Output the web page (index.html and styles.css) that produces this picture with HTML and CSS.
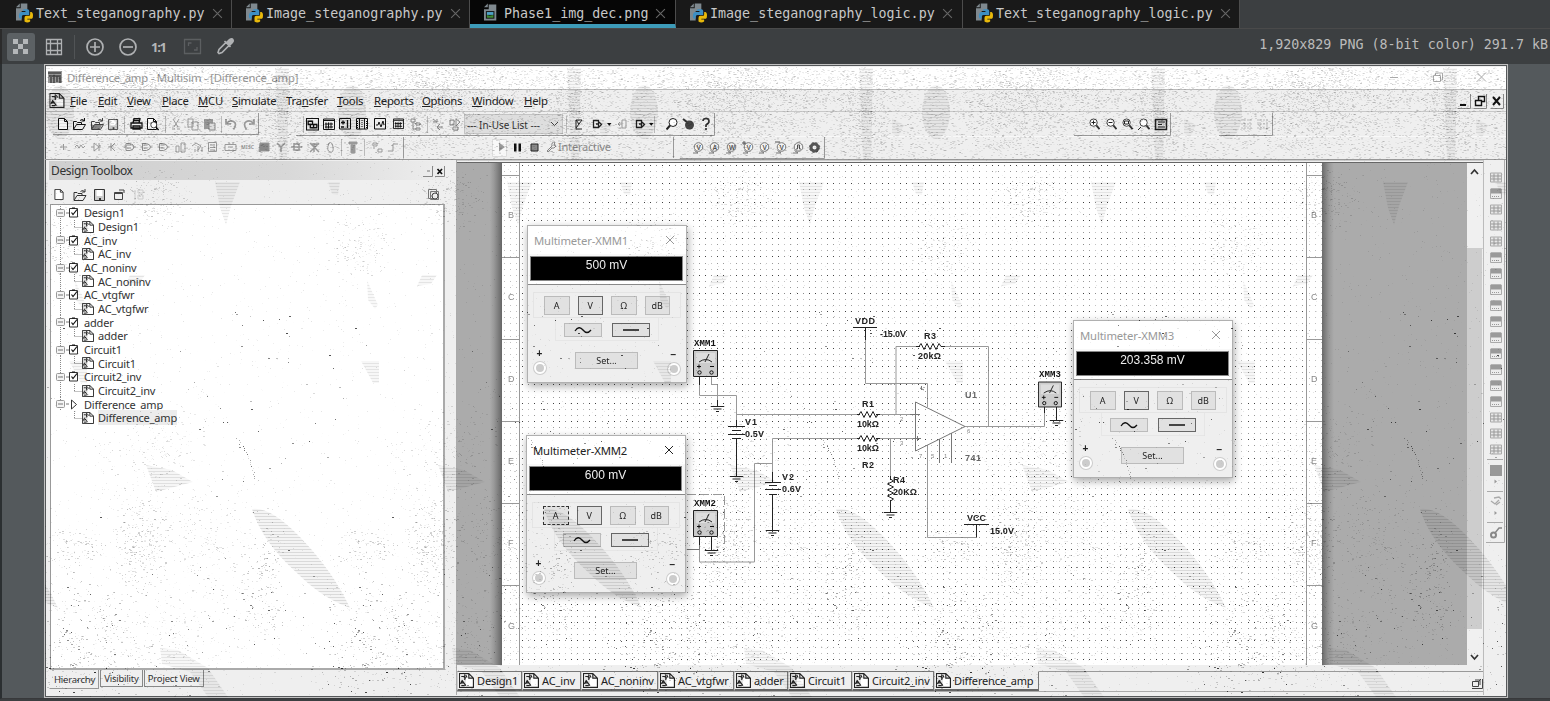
FILE: index.html
```html
<!DOCTYPE html>
<html lang="en">
<head>
<meta charset="utf-8">
<title>Phase1_img_dec.png</title>
<link rel="stylesheet" href="styles.css">
</head>
<body>
<svg class="defs" width="0" height="0">
  <defs>
    <symbol id="py" viewBox="0 0 18 20"><path d="M5 0h7v8H0V5h5z" fill="#7f898f"/><path d="M0 8h6v10H0zM0 4l4-4v4z" fill="#7f898f"/><path d="M8 6h4q2 0 2 2v4H8q-2 0-2 2v2H5q-2 0-2-3t2-4h5V8H7z" fill="#3d8fc4"/><path d="M15 9h1q2 0 2 4t-2 3h-4v1h3v2q-3 2-6 0v-4q0-2 2-2h3q1 0 1-2z" fill="#e8b90b"/></symbol>
    <symbol id="png" viewBox="0 0 18 20"><path d="M5 1h8v17H0V6h5zM0 4l4-4v4z" fill="#7f898f"/><rect x="2" y="8" width="9" height="8" fill="#111"/><path d="M3 9h7v3H3z" fill="#4fa3c7"/><path d="M3 12l3 1 4-1v3H3z" fill="#3f8a35"/></symbol>
    <symbol id="x" viewBox="0 0 10 10"><path d="M1 1l8 8M9 1l-8 8" stroke="currentColor" fill="none"/></symbol>
    <symbol id="doc" viewBox="0 0 13 13"><path d="M.5.5h8l4 4v8H.5zM8.500.5v4h4" fill="#fff" stroke="#222"/><path d="M1 1h5v11H1z" fill="#e4e4e4"/><path d="M2 3h2l2 1.500M5 1v5M3 6L1.500 9l3-1M3 7l3 4M2 11h3M6 2l1 2" stroke="#222" fill="none"/></symbol>
    <symbol id="chk" viewBox="0 0 10 11"><path d="M.5 1.500h8v8.500h-8z" fill="#fff" stroke="#333"/><path d="M3 1h3M2.500 5.500l1.500 2 4-5" stroke="#111" fill="none" stroke-width="1.200"/></symbol>
    <symbol id="new" viewBox="0 0 12 12"><path d="M1.500.5h6l3 3v8h-9zM7.500.5v3h3" fill="#fff" stroke="currentColor"/></symbol>
    <symbol id="open" viewBox="0 0 13 12"><path d="M.5 11V3.500h3l1 1h4V6M.5 11.500L3.500 6.500h9l-3 5zM7 2.500q2-2 4 0M11.500 0v3h-3" fill="none" stroke="currentColor"/></symbol>
    <symbol id="save" viewBox="0 0 12 12"><path d="M.5.5h10v11h-10z" fill="#ccc" stroke="currentColor"/><path d="M2.500 1h6v6h-6z" fill="#fff"/><path d="M5 9h2v2H5z" fill="currentColor"/></symbol>
    <symbol id="print" viewBox="0 0 13 12"><path d="M3 5l1-4.500h6L9 5M1 5h11v5H1zM3 8h7v3H3zM4 2.500h5" fill="none" stroke="currentColor" stroke-width="1.300"/></symbol>
    <symbol id="mag" viewBox="0 0 12 12"><circle cx="5" cy="4.500" r="4" fill="#fff" stroke="currentColor"/><path d="M8 7.500l3.500 4" stroke="currentColor" stroke-width="2"/></symbol>
    <symbol id="grid" viewBox="0 0 12 12"><path d="M.5.5h11v10.500H.5z" fill="#eee" stroke="currentColor"/><path d="M1 2h10M3 4v6M5.500 4v6M8 4v6M2 5.500h8M2 8.500h8" stroke="currentColor"/></symbol>
    <symbol id="net" viewBox="0 0 12 12"><path d="M.5.5h11v10.500H.5z" fill="#eee" stroke="currentColor"/><path d="M2 3h4v3H2zM7 6h3v3H7zM4 6v3h3" fill="none" stroke="currentColor" stroke-width="1.200"/></symbol>
    <symbol id="part" viewBox="0 0 12 12"><path d="M.5.5h11v10.500H.5z" fill="#eee" stroke="currentColor"/><path d="M2 4.500h4M4 2.500v4M8.500 2v8M2 9h3" fill="none" stroke="currentColor" stroke-width="1.300"/></symbol>
    <symbol id="cols" viewBox="0 0 12 12"><path d="M.5.5h11v10.500H.5z" fill="#eee" stroke="currentColor"/><path d="M3.500 1v10M8.500 1v10" stroke="currentColor"/><path d="M6 2v8M1.500 3v7M10.500 3v7" stroke="currentColor" stroke-dasharray="1 1"/></symbol>
    <symbol id="wave" viewBox="0 0 12 12"><path d="M.5.5h11v10.500H.5z" fill="#eee" stroke="currentColor"/><path d="M2 7h2l1-3 2 5 2-6 1 4" fill="none" stroke="currentColor"/></symbol>
    <symbol id="undo" viewBox="0 0 12 12"><path d="M1 1v5h5M1.500 5.500q3-4 7-2t0 8" fill="none" stroke="currentColor" stroke-width="1.700"/></symbol>
    <symbol id="gate" viewBox="0 0 12 10"><path d="M0 5h2M2 1.500h4q4 1 4 3.500T6 8.500H2zM10 5h2M3 3h4M3 6h4" fill="none" stroke="currentColor"/></symbol>
    <symbol id="probe" viewBox="0 0 12 12"><circle cx="6.500" cy="5" r="4.300" fill="#f4f4f4" stroke="currentColor"/><path d="M1 11h5L2.500 8.500" fill="none" stroke="currentColor"/></symbol>
    <symbol id="inst" viewBox="0 0 12 10"><path d="M.5.5h11v9.500H.5z" fill="#ececec" stroke="#aaa"/><path d="M1 0h10v5H1z" fill="#9a9a9a"/><path d="M2 8h8" stroke="#999" stroke-dasharray="1 1"/></symbol>
    <symbol id="instb" viewBox="0 0 12 10"><path d="M.5.5h11v9H.5z" fill="#e6e6e6" stroke="#aaa"/><path d="M1 3.500h10M1 6.500h10M4 1v8M8 1v8" stroke="#999"/></symbol>
    <symbol id="meter" viewBox="0 0 25 27"><path d="M.5.5h24v26H.5z" fill="#ccc" stroke="#222"/><path d="M3 3h19v10H3z" fill="#ddd"/><path d="M6 12q7-5 13 0M12 12l4-8" stroke="#222" fill="none"/><path d="M4 16.500h4M6 14.500v4M17 16.500h4" stroke="#111"/><circle cx="6.500" cy="22.500" r="1.700" fill="none" stroke="#111"/><circle cx="18.500" cy="22.500" r="1.700" fill="none" stroke="#111"/></symbol>
    <symbol id="gnd" viewBox="0 0 14 8"><path d="M0 1.500h14M3 4h8M5.500 6.500h3" stroke="#222"/></symbol>
    <symbol id="tp" viewBox="0 0 30 14"><path d="M5.500 0v14" stroke="#888" stroke-dasharray="1 1"/><rect x="1.500" y="3.500" width="8" height="7" rx="1" fill="#f4f4f4" stroke="#999"/><path d="M3 7h5M11 7h3" stroke="#777"/></symbol>
    <symbol id="tc" viewBox="0 0 30 14"><path d="M5.500 0v14M19.500 0v7M19.500 7.500h8" fill="none" stroke="#888" stroke-dasharray="1 1"/></symbol>
    <symbol id="tl" viewBox="0 0 30 14"><path d="M19.500 0v7M19.500 7.500h8" fill="none" stroke="#888" stroke-dasharray="1 1"/></symbol>
  </defs>
</svg>

<nav class="tabs">
  <div class="tab t1"><svg class="fi"><use href="#py"/></svg><span>Text_steganography.py</span><svg class="tx"><use href="#x"/></svg></div>
  <div class="tab t2"><svg class="fi"><use href="#py"/></svg><span>Image_steganography.py</span><svg class="tx"><use href="#x"/></svg></div>
  <div class="tab t3 on"><svg class="fi"><use href="#png"/></svg><span>Phase1_img_dec.png</span><svg class="tx"><use href="#x"/></svg></div>
  <div class="tab t4"><svg class="fi"><use href="#py"/></svg><span>Image_steganography_logic.py</span><svg class="tx"><use href="#x"/></svg></div>
  <div class="tab t5"><svg class="fi"><use href="#py"/></svg><span>Text_steganography_logic.py</span><svg class="tx"><use href="#x"/></svg></div>
</nav>

<header class="viewbar">
  <svg width="240" height="35" viewBox="0 29 240 35">
    <rect x="7" y="33" width="28" height="28" rx="3" fill="#5c6164"/>
    <path d="M13 39h5v5h-5zM23 39h5v5h-5zM18 44h5v5h-5zM13 49h5v5h-5zM23 49h5v5h-5z" fill="#b4b7b9"/>
    <path d="M46.500 39.500h15v15h-15zM50.500 39v16M57.500 39v16M46 43.500h16M46 50.500h16" fill="none" stroke="#afb1b3" stroke-width="1.300"/>
    <path d="M74.500 35v24" stroke="#515456"/>
    <g fill="none" stroke="#afb1b3" stroke-width="1.700"><circle cx="95" cy="47" r="8"/><path d="M90 47h10M95 42v10"/><circle cx="128" cy="47" r="8"/><path d="M123 47h10"/></g>
    <text x="151" y="51.500" class="ratio" textLength="16">1:1</text>
    <path d="M184.500 39.500h16v14h-16zM188.500 46v-3h3M197 47v3h-3" fill="none" stroke="#5c5f61" stroke-width="1.300"/>
    <path d="M219 53.500l-1-1 1-3 7-7 3 3-7 7zM224.500 41l6 6" fill="none" stroke="#afb1b3" stroke-width="1.600"/><path d="M226 42l3-3q3-2 4.500 0t-.5 4l-3 3z" fill="#afb1b3"/>
  </svg>
  <span class="info">1,920x829 PNG (8-bit color) 291.7 kB</span>
</header>

<main class="viewer">
<section class="shot">
  <div class="title">
    <svg width="14" height="14" viewBox="0 0 14 14"><path d="M0 1h14v12H0z" fill="#999"/><path d="M0 3h13M1 6h12M3 7v6M6 5v8M9 6v6M12 7v6" stroke="#444" stroke-width="1.500"/></svg>
    <span>Difference_amp - Multisim - [Difference_amp]</span>
    <svg class="cap" width="100" height="14" viewBox="0 0 100 14" fill="none" stroke="#aaa"><path d="M0 7.500h8M43.500 5.500h7v6h-7zM45.500 5v-2h7v7h-2M87 2.500l9 9M96 2.500l-9 9"/></svg>
  </div>
  <div class="menu">
    <svg width="16" height="15"><use href="#doc"/></svg>
    <div class="items"><span><u>F</u>ile</span><span><u>E</u>dit</span><span><u>V</u>iew</span><span><u>P</u>lace</span><span><u>M</u>CU</span><span><u>S</u>imulate</span><span>Tra<u>n</u>sfer</span><span><u>T</u>ools</span><span><u>R</u>eports</span><span><u>O</u>ptions</span><span><u>W</u>indow</span><span><u>H</u>elp</span></div>
    <svg class="cap" width="48" height="17" viewBox="0 0 48 17"><path d="M.5 16.500h13V2M16.500 16.500h13V2M33.500 16.500h13V2" fill="none" stroke="#888"/><path d="M3 13h6" stroke="#111" stroke-width="2"/><path d="M18.500 8.500h6v5h-6zM21.500 8V4.500h6v5h-3" fill="none" stroke="#111" stroke-width="1.400"/><path d="M36 5l7 8M43 5l-7 8" stroke="#111" stroke-width="2"/></svg>
  </div>
  <svg class="bar" width="1461" height="48" viewBox="45 112 1461 48">
    <g fill="none" stroke="#999"><path d="M53 134.500h205.500V113M296 135.500h411.500V113M1077 135.500h86.500V113M1219 135.500h41.500V113M46 158.500h357.500V137M495 158.500h157V137M659 158.500h154V137" stroke="none"/><path d="M53 134.500h205.500V113M296 135.500h418.500V113M1074 135.500h96.500V113M1219 135.500h53.500V113M45 159.500h1461M403.500 158.500V137M673.500 158V137M680 158.500h144.500V137"/><path d="M124.500 116v17M165.500 116v17M221.500 116v17M303.500 116v17M427.500 116v17M566.500 116v17M654.500 116v17M341.500 139v17M364.500 139v17" stroke="#bbb"/></g>
    <path d="M46 136.500h1460" stroke="#f8f8f8"/>
    <g color="#111">
      <use href="#new" x="57" y="118" width="12" height="12"/><use href="#open" x="73" y="118" width="13" height="12"/>
      <use href="#print" x="130" y="118" width="13" height="12"/><use href="#new" x="146" y="118" width="12" height="12"/><use href="#mag" x="150" y="121" width="9" height="10"/>
      <use href="#net" x="306" y="118" width="13" height="13"/><use href="#grid" x="323" y="118" width="12" height="13"/><use href="#part" x="339" y="118" width="12" height="12"/><use href="#cols" x="356" y="118" width="12" height="12"/><use href="#wave" x="374" y="118" width="12" height="12"/><use href="#grid" x="393" y="118" width="11" height="12"/>
    </g>
    <g color="#444"><path d="M92 125h10l-3 5h-7z" fill="#888"/><use href="#open" x="91" y="118" width="13" height="12"/><use href="#save" x="108" y="119" width="11" height="11"/></g>
    <g color="#999">
      <path d="M173 119l5 8M179 119l-5 8M172 129h3M177 129h3M188 119h5v8h-5zM192 122h6v8h-6z" stroke="#999" fill="none"/><path d="M204 119h9v10h-9z" fill="#999"/><path d="M209 123h6v7h-6z" fill="#ddd" stroke="#888"/>
      <use href="#undo" x="225" y="118" width="12" height="12"/><use href="#undo" x="-255" y="118" width="12" height="12" transform="scale(-1 1)"/>
      <path d="M411 119h4v3h-4zM416 123h4v2h-4zM416 128h4v2h-4zM413 122v7h3M433 119l4 3M433 122h4v-3M437 127h6M440 124l-3 3 3 3M450 120h4v5h-4zM456 119l4 3-4 4zM453 127h5v3h-5z" stroke="#888" fill="none"/>
    </g>
    <rect x="464.500" y="114.500" width="98" height="19" fill="#dedede" stroke="#c4c4c4"/>
    <text x="467" y="129" textLength="73" lengthAdjust="spacingAndGlyphs" fill="#333">--- In-Use List ---</text>
    <path d="M551 122l3.500 3.500 3.500-3.500" fill="none" stroke="#444"/>
    <g fill="none" stroke="#222"><path d="M582 120h-6v9h6M576 120l3 4-3 4M582 120l-3 4"/><path d="M593.500 120.500h5v7h-5zM596 124h3M599 122l2.500 2.500-2.500 2.500" stroke-width="1.300"/><path d="M636.500 120.500h5v7h-5zM639 124h3M642 122l2.500 2.500-2.500 2.500" stroke-width="1.300"/><path d="M626 120h-4v8h4zM622 124h-4l2-2M618 124l2 2" stroke="#999"/></g>
    <path d="M607 123h4.500l-2.200 2.700zM649 123h4.500l-2.200 2.700z" fill="#111"/>
    <g color="#222"><use href="#mag" x="-678" y="118" width="12" height="12" transform="scale(-1 1)"/><path d="M683 119l4 3" stroke="#333" stroke-width="2"/><circle cx="689.500" cy="125" r="4.500" fill="#444"/><path d="M703 121q0-2.500 3-2.500t3 2.500-3 4v2M706 128v2" fill="none" stroke="#333" stroke-width="1.700"/></g>
    <g color="#333"><use href="#mag" x="1089" y="118" width="11" height="12"/><use href="#mag" x="1106" y="118" width="11" height="12"/><use href="#mag" x="1122" y="118" width="11" height="12"/><use href="#mag" x="1139" y="118" width="11" height="12"/><path d="M1091.500 122.500h4M1093.500 120.500v4M1108.500 122.500h4M1124.500 121h4v3h-4zM1138 130l3-3" stroke="#222" fill="none"/><path d="M1155.500 119.500h11v10h-11z" fill="#ddd" stroke="#222" stroke-width="1.500"/><path d="M1158 122h7M1158 124.500h4M1158 127h7" stroke="#222"/></g>
    <path d="M1241 120h12M1241 124h12M1241 128h12M1244 119v11M1250 119v11M1257 120h12M1257 124h12M1257 128h12M1260 119v11M1267 119v11" stroke="#bbb" stroke-dasharray="2 1"/>
    <g fill="none" stroke="#999" color="#8c8c8c">
      <path d="M60 147h7M63.500 144v6M75 147l2-2 2 3 2-3 2 3 2-2M91 147h3M94 143v8l5-4zM99 143v8M99 147h2M108 147h3M111 143v8M115 143l-4 4 4 4"/>
      <use href="#gate" x="124" y="142" width="12" height="10"/><use href="#gate" x="140" y="142" width="13" height="10"/><use href="#gate" x="157" y="142" width="13" height="10"/>
      <path d="M176 152v-6h3v6zM181 152v-9h4v9zM192 146l4-3 5 3-3 4M198 152v-6M202 152v-5M195 152v-3M208.500 142.500h8v9h-8zM210 145h5M210 147.500h5M210 150h5M225 144.500h11v6h-11zM229 142v2M233 142v2M228 147h5"/>
      <text x="241" y="149" class="tiny" stroke="none" fill="#999" textLength="13">MISC</text>
      <path d="M260 143h9v8h-10z" fill="#888"/><path d="M277 143l4 4 4-4M281 147v5M291 147h11M294 144h5v6h-5zM310 143l9 9M319 143l-9 9M311 144h8M314 143v9" stroke-width="1.500"/><path d="M329 143q3-2 4 4t-3 5-1-9M373 143h4v3h-4zM378 149h4v3h-4zM374 147v2M388 151h5v-7h5"/><path d="M349 142h8v2h-8zM351 145h4v8h-4z" fill="#999"/>
    </g>
    <path d="M492.500 139.500h14v17h-14z" fill="#f8f8f8" stroke="#ddd"/><path d="M499 142.500v9l6-4.500z" fill="#999"/><path d="M514 143.500h2.500v8H514zM518.500 143.500h2.500v8h-2.500z" fill="#111"/><path d="M531 144h7v7h-7z" fill="#888" stroke="#222"/>
    <path d="M547 151l5-5q-1-4 3-4l-1 3 2 1-2 2h-2l-4 4z" fill="none" stroke="#888"/><text x="558" y="150.500" textLength="53" fill="#8b8b8b">Interactive</text>
    <g color="#777"><use href="#probe" x="692" y="142" width="12" height="12"/><use href="#probe" x="708" y="142" width="12" height="12"/><use href="#probe" x="725" y="142" width="12" height="12"/><use href="#probe" x="742" y="142" width="12" height="12"/><use href="#probe" x="758" y="142" width="12" height="12"/><use href="#probe" x="775" y="142" width="12" height="12"/><use href="#probe" x="792" y="142" width="12" height="12"/></g>
    <g class="pt"><text x="696.500" y="149.500">V</text><text x="712.500" y="149.500">A</text><text x="729" y="149.500">W</text><text x="746.500" y="149.500">V</text><text x="762.500" y="149.500">V</text><text x="779.500" y="149.500">V</text></g>
    <path d="M796 149h1.500v-4h2v4h1.500M742 143h4M744 141v4M775 142h5" fill="none" stroke="#555"/>
    <circle cx="814.500" cy="147.500" r="3.500" fill="none" stroke="#555" stroke-width="3"/><circle cx="814.500" cy="147.500" r="5" fill="none" stroke="#555" stroke-dasharray="2 2"/>
  </svg>

  <div class="body">
    <aside class="toolbox">
      <div class="tbhead"><span>Design Toolbox</span><svg width="22" height="12" viewBox="0 0 22 12"><path d="M0 11.500h9.500V1M12 11.500h9.500V1" fill="none" stroke="#888"/><path d="M4 6h3" stroke="#777"/><path d="M14.500 4l4.500 5M19 4l-4.500 5" stroke="#111" stroke-width="1.700"/></svg></div>
      <div class="tbtools"><svg width="396" height="20" viewBox="49 184 396 20"><g color="#333"><use href="#new" x="53" y="190" width="12" height="11"/><use href="#open" x="73" y="190" width="14" height="12"/><use href="#save" x="94" y="190" width="12" height="12"/><path d="M114.500 193.500h8v7h-8zM114 194.500h9M119 191h5v3" fill="none" stroke="#444"/></g><path d="M134 192h2M135 192v9M138 191h5v3h-5zM138 196h5v4h-5z" fill="none" stroke="#ccc"/><path d="M428.500 190.500h8v9h-8zM430.500 192.500h8v8h-8z" fill="#eee" stroke="#777"/><circle cx="435" cy="197" r="3" fill="#eee" stroke="#444"/></svg></div>
      <div class="tree">
        <div class="row"><svg class="ln"><use href="#tp"/></svg><svg class="ck"><use href="#chk"/></svg>Design1</div>
        <div class="row kid"><svg class="ln"><use href="#tc"/></svg><svg class="dc"><use href="#doc"/></svg><b>Design1</b></div>
        <div class="row"><svg class="ln"><use href="#tp"/></svg><svg class="ck"><use href="#chk"/></svg>AC_inv</div>
        <div class="row kid"><svg class="ln"><use href="#tc"/></svg><svg class="dc"><use href="#doc"/></svg><b>AC_inv</b></div>
        <div class="row"><svg class="ln"><use href="#tp"/></svg><svg class="ck"><use href="#chk"/></svg>AC_noninv</div>
        <div class="row kid"><svg class="ln"><use href="#tc"/></svg><svg class="dc"><use href="#doc"/></svg><b>AC_noninv</b></div>
        <div class="row"><svg class="ln"><use href="#tp"/></svg><svg class="ck"><use href="#chk"/></svg>AC_vtgfwr</div>
        <div class="row kid"><svg class="ln"><use href="#tc"/></svg><svg class="dc"><use href="#doc"/></svg><b>AC_vtgfwr</b></div>
        <div class="row"><svg class="ln"><use href="#tp"/></svg><svg class="ck"><use href="#chk"/></svg>adder</div>
        <div class="row kid"><svg class="ln"><use href="#tc"/></svg><svg class="dc"><use href="#doc"/></svg><b>adder</b></div>
        <div class="row"><svg class="ln"><use href="#tp"/></svg><svg class="ck"><use href="#chk"/></svg>Circuit1</div>
        <div class="row kid"><svg class="ln"><use href="#tc"/></svg><svg class="dc"><use href="#doc"/></svg><b>Circuit1</b></div>
        <div class="row"><svg class="ln"><use href="#tp"/></svg><svg class="ck"><use href="#chk"/></svg>Circuit2_inv</div>
        <div class="row kid"><svg class="ln"><use href="#tc"/></svg><svg class="dc"><use href="#doc"/></svg><b>Circuit2_inv</b></div>
        <div class="row"><svg class="ln"><use href="#tp"/></svg><svg class="ck" viewBox="0 0 10 11"><path d="M2.500 1v9l5-4.500z" fill="#fff" stroke="#333"/></svg>Difference_amp</div>
        <div class="row kid"><svg class="ln"><use href="#tl"/></svg><svg class="dc"><use href="#doc"/></svg><b class="sel">Difference_amp</b></div>
      </div>
      <div class="tbtabs"><span class="cur">Hierarchy</span><span>Visibility</span><span>Project View</span></div>
    </aside>

    <section class="work">
      <div class="stage">
        <div class="canvas">
          <canvas id="dots" width="820" height="502"></canvas>
          <svg class="sch" width="1010" height="502" viewBox="457 163 1010 502">
            <g fill="none" stroke="#999"><path d="M519.500 163v502M502 175.500h17M502 257.500h17M502 339.500h17M502 421.500h17M502 503.500h17M502 585.500h17M1306.500 163v502M1307 175.500h15M1307 257.500h15M1307 339.500h15M1307 421.500h15M1307 503.500h15M1307 585.500h15"/></g>
            <g class="rul"><text x="508" y="217.500">B</text><text x="508" y="299.500">C</text><text x="508" y="381.500">D</text><text x="508" y="463.500">E</text><text x="508" y="545.500">F</text><text x="508" y="628.500">G</text><text x="1311" y="217.500">B</text><text x="1311" y="299.500">C</text><text x="1311" y="381.500">D</text><text x="1311" y="463.500">E</text><text x="1311" y="545.500">F</text><text x="1311" y="628.500">G</text></g>
            <g fill="none" stroke="#999">
              <path d="M865.500 340v43.500h62V407M916 346.500h-20v68M945 346.500h43.500v80M736 414.500h121M880 414.500h35M857 438.500h-84.500V472M880 438.500h35M890.500 438v38M965 426.500h79.500V412M976.500 537.500h-49V445M699.500 384v11.500h37V420M711.500 377v7.500h6V400M754.500 562V463.500H773M699.500 545v17h55"/>
              <path d="M915.500 402v49l49.500-24.500z" stroke="#777"/><path d="M939.500 439v24M951.500 433v30M699.500 537v12.500H687" stroke="#777"/><path d="M687 494.500h37.500v55" stroke="#999" stroke-dasharray="9 4"/>
              <path d="M910 414.500h10M913 438.500h8M917.500 436v5M921.500 386v4M920 388l4 2" stroke="#777"/>
            </g>
            <g fill="none" stroke="#222">
              <path d="M853 327.500h24M865.500 327v13M964 524.500h25M976.500 524v13.500M699.500 377v8M699.500 537v8M711.500 537v14M1044.500 407v6M1056.500 407v13M717.500 400v6M736.500 420v7M736.500 439v38M772.500 472v10M772.500 494v36M890.500 476v4M890.500 500v12M945 346.500h-4M916 346.500h4M857 414.500h3M857 438.500h3M876 414.500h4M876 438.500h4"/>
              <path d="M728 426.500h17M732 430.500h9M728 434.500h17M732 438.500h9M765 482.500h16M769 485.500h8M765 489.500h16M769 494.500h8"/>
              <path d="M919 346.500l2-3 3 6 3-6 3 6 3-6 3 6 3-6 2 3M859 414.500l2-3 3 6 3-6 3 6 3-6 3 6 2-3M859 438.500l2-3 3 6 3-6 3 6 3-6 3 6 2-3M890.500 479l3 2-6 3 6 3-6 3 6 3-6 3 6 3-3 2"/>
            </g>
            <use href="#meter" x="693" y="350" width="25" height="27"/><use href="#meter" x="693" y="510" width="25" height="27"/><use href="#meter" x="1038" y="381" width="24" height="27"/>
            <use href="#gnd" x="710.500" y="405" width="14" height="8"/><use href="#gnd" x="729.500" y="475" width="14" height="8"/><use href="#gnd" x="765.500" y="529" width="14" height="8"/><use href="#gnd" x="704.500" y="549" width="14" height="8"/><use href="#gnd" x="883.500" y="511" width="14" height="8"/><use href="#gnd" x="1049.500" y="419" width="14" height="8"/>
            <g class="mono"><text x="694" y="345.500" textLength="22">XMM1</text><text x="694" y="505.500" textLength="22">XMM2</text><text x="1039" y="376.500" textLength="22">XMM3</text></g>
            <g class="lab"><text x="855" y="323.500" textLength="20">VDD</text><text x="880" y="336.500" textLength="26">-15.0V</text><text x="924" y="338.500" textLength="12">R3</text><text x="918" y="358.500" textLength="23">20kΩ</text><text x="862" y="406.500" textLength="12">R1</text><text x="857" y="426.500" textLength="22">10kΩ</text><text x="857" y="451" textLength="22">10kΩ</text><text x="862" y="468" textLength="12">R2</text><text x="893" y="482.500" textLength="12">R4</text><text x="893" y="494.500" textLength="24">20KΩ</text><text x="782" y="479.500" textLength="12">V2</text><text x="782" y="492" textLength="19">0.6V</text><text x="745" y="424.500" textLength="12">V1</text><text x="745" y="436.500" textLength="19">0.5V</text><text x="967" y="521" textLength="19">VCC</text><text x="990" y="533.500" textLength="24">15.0V</text></g>
            <g class="lab dim"><text x="965" y="397.500" textLength="12">U1</text><text x="965" y="460.500" textLength="16">741</text></g>
            <g class="pin"><text x="900" y="421">2</text><text x="900" y="445">3</text><text x="967" y="433">6</text><text x="919" y="458">7</text><text x="931" y="458">5</text><text x="944" y="458">1</text></g>
          </svg>

          <article class="mm m1"><div class="mt"><span>Multimeter-XMM1</span><svg width="10" height="10"><use href="#x"/></svg></div><div class="disp"><span>500 mV</span></div><div class="mb"><div class="r1"><i>A</i><i class="dn">V</i><i>Ω</i><i>dB</i></div><div class="r2"><i><svg width="18" height="8"><path d="M1 5q4-6 8-1t8 0" fill="none" stroke="#111" stroke-width="1.300"/></svg></i><i class="dn"><svg width="18" height="8"><path d="M1 4h16" stroke="#111" stroke-width="1.500"/></svg></i></div><div class="r3"><div class="term"><em>+</em><s></s></div><i class="set">Set...</i><div class="term neg"><em>−</em><s></s></div></div></div></article>
          <article class="mm m2 act"><div class="mt"><span>Multimeter-XMM2</span><svg width="10" height="10"><use href="#x"/></svg></div><div class="disp"><span>600 mV</span></div><div class="mb"><div class="r1"><i class="foc">A</i><i class="dn">V</i><i>Ω</i><i>dB</i></div><div class="r2"><i><svg width="18" height="8"><path d="M1 5q4-6 8-1t8 0" fill="none" stroke="#111" stroke-width="1.300"/></svg></i><i class="dn"><svg width="18" height="8"><path d="M1 4h16" stroke="#111" stroke-width="1.500"/></svg></i></div><div class="r3"><div class="term"><em>+</em><s></s></div><i class="set">Set...</i><div class="term neg"><em>−</em><s></s></div></div></div></article>
          <article class="mm m3"><div class="mt"><span>Multimeter-XMM3</span><svg width="10" height="10"><use href="#x"/></svg></div><div class="disp"><span>203.358 mV</span></div><div class="mb"><div class="r1"><i>A</i><i class="dn">V</i><i>Ω</i><i>dB</i></div><div class="r2"><i><svg width="18" height="8"><path d="M1 5q4-6 8-1t8 0" fill="none" stroke="#111" stroke-width="1.300"/></svg></i><i class="dn"><svg width="18" height="8"><path d="M1 4h16" stroke="#111" stroke-width="1.500"/></svg></i></div><div class="r3"><div class="term"><em>+</em><s></s></div><i class="set">Set...</i><div class="term neg"><em>−</em><s></s></div></div></div></article>
        </div>
        <div class="scroll"><svg width="15" height="14"><path d="M4 11l3.500-4 3.500 4" fill="none" stroke="#333" stroke-width="1.700"/></svg><div class="thumb"></div><svg width="15" height="14"><path d="M4 4l3.500 4 3.500-4" fill="none" stroke="#333" stroke-width="1.700"/></svg></div>
      </div>
      <div class="sheets">
        <span><svg><use href="#doc"/></svg>Design1</span><span><svg><use href="#doc"/></svg>AC_inv</span><span><svg><use href="#doc"/></svg>AC_noninv</span><span><svg><use href="#doc"/></svg>AC_vtgfwr</span><span><svg><use href="#doc"/></svg>adder</span><span><svg><use href="#doc"/></svg>Circuit1</span><span><svg><use href="#doc"/></svg>Circuit2_inv</span><span class="cur"><svg><use href="#doc"/></svg>Difference_amp</span>
        <div class="rest"><svg class="corner" viewBox="0 0 12 12"><path d="M1 11.500h10.500V2M1.500 4.500h6v5h-6zM4 3h5v5M7 5l3-3" fill="none" stroke="#444"/></svg></div>
      </div>
    </section>

    <svg class="insts" id="insts" width="19" height="383" viewBox="1486 160 19 383">
      <path d="M1504.500 160v382.500H1486M1487 459.500h16M1487 491.500h16M1487 522.500h16" fill="none" stroke="#aaa"/>
      <path d="M1490 465h12v11h-12z" fill="#999"/><path d="M1494.500 479.500v4l2.500-2zM1494.500 511v4l2.500-2z" fill="#999"/>
      <path d="M1491 501l4 3 4-4M1494 498l5-1 2 2M1496 505l4-3" fill="none" stroke="#aaa" stroke-width="1.300"/>
      <circle cx="1493.500" cy="535" r="2.500" fill="none" stroke="#888" stroke-width="2"/><path d="M1495 533l4-5h3" fill="none" stroke="#888" stroke-width="1.500"/>
    </svg>
  </div>
  <canvas id="grain" width="1461" height="630"></canvas>
</section>
</main>
<script src="app.js"></script>
</body>
</html>
```

FILE: styles.css
```css
* { box-sizing: border-box; }
html, body { margin: 0; height: 100%; overflow: hidden; }
body { background: #3c3f41; font: 11px "Noto Sans", "Open Sans", sans-serif; color: #333; display: flex; flex-direction: column; width: 1550px; height: 701px; }
svg { display: block; flex: none; }
.defs { position: absolute; }
i, em, s { font-style: normal; text-decoration: none; }

.tabs { display: flex; height: 29px; flex: none; background: #3c3f41; border-bottom: 1px solid #4a4a4a; font: 13.33px "DejaVu Sans Mono", monospace; color: #c8c8c8; }
.tab { display: flex; align-items: center; height: 28px; background: #191919; border-right: 1px solid #4c4c4c; padding: 0 0 2px 16px; white-space: nowrap; }
.tab .fi { width: 17px; height: 20px; margin-right: 3px; }
.tab .tx { width: 11px; height: 11px; margin-left: 7px; color: #666; }
.t1 { width: 232px; }
.t2 { width: 238px; padding-left: 14px; }
.t3 { width: 206px; padding-left: 14px; }
.t4 { width: 287px; padding-left: 14px; }
.t5 { width: 277px; padding-left: 13px; }
.tab.on { background: #060606; border-bottom: 4px solid #3d9bb8; padding-bottom: 0; padding-top: 2px; }

.viewbar { height: 35px; flex: none; display: flex; justify-content: space-between; align-items: center; border-left: 2px solid #2b2b2b; }
.viewbar > svg { margin-left: -2px; }
.ratio { font: bold 13px "Open Sans", sans-serif; fill: #b4b6b8; }
.info { font: 13.33px "DejaVu Sans Mono", monospace; color: #bbb; padding: 0 2px 5px 0; }

.viewer { flex: none; height: 635px; background: #54595c; border-left: 2px solid #2b2f31; border-bottom: 1px solid #38393b; padding-left: 42px; }
.shot { position: relative; width: 1464px; height: 634px; border: 1px solid #c0c0c0; background: #efefef; box-shadow: inset 0 0 0 1px #55585a; padding: 2px 1px 1px 0; }
#grain { position: absolute; left: 0; top: 2px; }

.title { height: 23px; margin-left: 1px; background: #fff; border-bottom: 1px solid #bbb; display: flex; align-items: center; padding: 0 16px 2px 2px; color: #999; }
.title span { margin-left: 5px; font-size: 11.3px; letter-spacing: -.2px; }
.title .cap { margin-left: auto; }
.menu { height: 22px; margin-left: 1px; border-bottom: 1px solid #c8c8c8; display: flex; align-items: center; padding-left: 3px; font-size: 11.3px; letter-spacing: -.25px; color: #222; }
.items { display: grid; grid-template-columns: 28px 29px 35px 36px 34px 54px 51px 37px 48px 50px 52px 30px; margin-left: 5px; }
.menu .cap { margin-left: auto; margin-right: 1px; }
.bar { font-size: 11px; }
.tiny { font-size: 5px; font-weight: bold; }
.pt { font: bold 6.500px "Liberation Sans", sans-serif; fill: #555; }

.body { display: flex; height: 535px; }
.toolbox { width: 412px; padding: 1px 0 0 4px; border-right: 1px solid #aaa; }
.tbhead { width: 396px; height: 19px; background: linear-gradient(90deg, #cfcfcf, #d8d8d8 60%, #eee); display: flex; align-items: center; justify-content: space-between; padding: 0 0 0 2px; font-size: 12px; letter-spacing: -.35px; }
.tbtools { height: 24px; padding-top: 3px; width: 396px; }
.tree { width: 395px; height: 466px; margin-left: 1px; background: #fff; border: 1px solid #999; border-right: 2px solid #aaa; border-bottom: 2px solid #aaa; padding: 1px 0 0 4px; }
.row { height: 13.68px; display: flex; align-items: center; font-size: 11px; letter-spacing: -.18px; white-space: nowrap; }
.row .ln { width: 30px; height: 14px; margin-right: -16px; }
.row .ck { width: 10px; height: 11px; margin-right: 5px; }
.kid .dc { width: 12px; height: 12px; margin: 0 4px 0 13px; }
.row b { font-weight: normal; }
.row .sel { background: #ececec; }
.tbtabs { display: flex; height: 18px; font-size: 9.5px; letter-spacing: -.2px; line-height: 15px; }
.tbtabs span { border: 1px solid #888; border-top: 0; height: 17px; padding: 1px 3px; margin-right: 1px; white-space: nowrap; }
.tbtabs .cur { border-color: transparent #999 #999 transparent; height: 19px; padding-top: 2px; padding-left: 4px; }

.work { width: 1027px; padding-top: 1px; border-right: 1px solid #bbb; border-top: 1px solid #ccc; }
.stage { display: flex; height: 503px; border-top: 1px solid #666; }
.canvas { position: relative; width: 1010px; height: 502px; overflow: hidden; background: linear-gradient(90deg, #ababab 0 33px, #999 37px, #666 45px, #fff 45px 865px, #6a6a6a 865px, #999 872px, #ababab 877px); }
#dots { position: absolute; left: 45px; top: 0; }
.sch { position: absolute; left: 0; top: 0; }
.rul { font: 9px "Liberation Sans", sans-serif; fill: #8a8a8a; }
.lab { font: bold 9px "Liberation Sans", sans-serif; fill: #222; }
.dim { fill: #666; }
.mono { font: bold 9px "Liberation Mono", monospace; fill: #111; }
.pin { font: 6px "Liberation Sans", sans-serif; fill: #888; }

.mm { position: absolute; width: 160px; height: 158px; background: #efefef; border: 1px solid #b0b0b0; box-shadow: 1px 3px 8px rgba(0,0,0,.35); color: #222; }
.m1 { left: 70px; top: 62px; }
.m2 { left: 69px; top: 272px; }
.m3 { left: 616px; top: 157px; }
.mt { height: 28px; background: #fff; display: flex; align-items: center; justify-content: space-between; padding: 0 11px 0 6px; color: #999; font-size: 11.3px; letter-spacing: -.15px; }
.act .mt { color: #222; }
.disp { height: 30px; border: 2px solid #f8f8f8; border-right: 3px solid #f4f4f4; border-bottom: 3px solid #fff; box-shadow: 0 1px 0 #888, inset 0 0 0 1px #888; padding: 1px; text-align: center; }
.disp span { display: block; height: 23px; background: #000; color: #eee; font: 12px/16px "Liberation Sans", sans-serif; }
.mb i { display: flex; align-items: center; justify-content: center; background: #e1e1e1; border: 1px solid #bbb; font-size: 9px; }
.mb i.dn { border-color: #666; }
.mb i.foc { border: 1px dashed #333; }
.r1 { display: flex; gap: 8px; margin: 8px 5px 0; height: 26px; border: 1px solid #e4e4e4; padding: 3px 10px 2px; }
.r1 i { width: 25.500px; height: 19px; }
.r2 { display: flex; gap: 10px; margin: 0 27px; height: 23px; border: 1px solid #e6e6e6; border-top: 0; padding: 5px 8px 3px; }
.r2 i { width: 38px; height: 14px; }
.r3 { display: flex; justify-content: space-between; padding: 8px 6px 0 5px; }
.set { width: 63px; height: 17px; margin-top: 3px; }
.term { width: 13px; text-align: center; }
.term em { display: block; font: bold 10px/10px "Liberation Sans", sans-serif; }
.term s { display: block; width: 12px; height: 12px; border-radius: 50%; background: #ccc; border: 2px solid #fff; box-shadow: 0 0 0 1px #ccc; margin: 3px auto 0; }
.neg { padding-top: 1px; }

.scroll { width: 15px; background: #f0f0f0; display: flex; flex-direction: column; }
.scroll .thumb { margin: 71px 0 auto; height: 381px; background: #cdcdcd; }
.sheets { display: grid; grid-template-columns: 65px 59px 77px 76px 54px 64px 82px 105px 1fr; height: 27px; padding: 6px 0 0 0; font-size: 11px; letter-spacing: -.15px; color: #222; border-bottom: 1px solid #aaa; }
.sheets span { display: flex; align-items: center; gap: 3px; height: 20px; border: 1px solid #777; border-left: 1px solid #ccc; border-bottom: 2px solid #666; white-space: nowrap; overflow: hidden; padding-left: 1px; }
.sheets span svg { width: 15px; height: 15px; }
.sheets .cur { border-top-color: transparent; }
.rest { border-top: 1px solid #999; display: flex; justify-content: flex-end; }
.sheets .corner { width: 12px; height: 12px; margin: 5px 0 0; }
.insts { margin-left: 2px; }
```

FILE: app.js
```js
// Seeded generator keeps the grain identical on every load.
let seed = 20931;
function rnd() { seed = (seed * 1664525 + 1013904223) >>> 0; return seed / 4294967296; }

// Schematic grid dots.
(function () {
  const c = document.getElementById('dots').getContext('2d');
  for (let j = 0; j < 83; j++) {
    for (let i = 0; i < 135; i++) {
      const x = Math.round(2 + i * 6.095), y = Math.round(2 + j * 6.095);
      const edge = x < 17 || x > 805;
      const a = edge ? 0.25 : (j % 3 === 0 ? 0.75 : 0.4) * (i % 3 === 1 ? 0.6 : 1);
      c.fillStyle = 'rgba(0,0,0,' + a + ')';
      c.fillRect(x, y, 1, 1);
    }
  }
})();

// Instrument column.
(function () {
  const s = document.getElementById('insts');
  for (let k = 0; k < 18; k++) {
    const u = document.createElementNS('http://www.w3.org/2000/svg', 'use');
    u.setAttribute('href', [0, 2, 3, 4, 15, 16, 17].includes(k) ? '#instb' : '#inst');
    u.setAttribute('x', 1490); u.setAttribute('y', 172 + k * 16);
    u.setAttribute('width', 12); u.setAttribute('height', 11);
    s.appendChild(u);
  }
})();

// Repeating 292px texture: banded shapes plus speckles.
(function () {
  const cv = document.getElementById('grain'), c = cv.getContext('2d');
  const P = 292, OX = 45, OY = 67;
  function bands(path, a) {
    for (let t = -1; t < 6; t++) {
      c.save();
      c.translate(t * P - OX, -OY);
      c.beginPath(); path(); c.clip();
      c.fillStyle = 'rgba(0,0,0,' + a * 0.4 + ')'; c.fillRect(0, 60, 500, 640);
      c.fillStyle = 'rgba(0,0,0,' + a + ')';
      for (let y = 60; y < 700; y += 3) c.fillRect(0, y, 500, 1);
      c.restore();
    }
  }
  const poly = (...p) => () => { c.moveTo(p[0], p[1]); for (let i = 2; i < p.length; i += 2) c.lineTo(p[i], p[i + 1]); c.closePath(); };
  bands(() => c.ellipse(352, 112, 14, 27, 0, 0, 7), 0.1);
  bands(poly(275, 68, 289, 68, 287, 160, 279, 160), 0.08);
  bands(poly(215, 182, 240, 182, 231, 206, 226, 225, 220, 208), 0.08);
  bands(poly(328, 182, 340, 182, 338, 195, 332, 194), 0.08);
  bands(poly(308, 118, 320, 125, 314, 138, 308, 133), 0.07);
  bands(poly(367, 280, 378, 305, 375, 309, 368, 300), 0.07);
  bands(poly(417, 286, 422, 275, 437, 275, 431, 284), 0.08);
  bands(poly(361, 361, 379, 361, 379, 383, 373, 383), 0.08);
  bands(poly(146, 465, 172, 470, 193, 482, 156, 492), 0.09);
  bands(() => {
    c.moveTo(252, 509); c.quadraticCurveTo(270, 506, 300, 537);
    c.quadraticCurveTo(333, 571, 350, 608); c.quadraticCurveTo(322, 598, 298, 574);
    c.quadraticCurveTo(262, 542, 252, 509);
  }, 0.11);
  bands(poly(160, 648, 178, 650, 208, 668, 228, 697, 208, 697, 190, 672, 162, 664), 0.08);

  const dots = [];
  function cloud(n, cx, cy, rx, ry, a) {
    for (let i = 0; i < n; i++) {
      const g = rnd() + rnd() - 1, h = rnd() + rnd() - 1;
      dots.push([cx + g * rx, cy + h * ry, a * rnd(), rnd() < 0.4 ? 2 : 1]);
    }
  }
  for (let i = 0; i < 3200; i++) dots.push([rnd() * P, 67 + rnd() * 92, 0.13 * rnd(), 2]);
  for (let i = 0; i < 1600; i++) dots.push([rnd() * P, 67 + rnd() * 628, 0.12 * rnd(), 1]);
  cloud(900, 180, 95, 100, 45, 0.14);
  cloud(700, 130, 100, 50, 60, 0.14);
  cloud(500, 278, 110, 28, 55, 0.14);
  cloud(250, 155, 200, 40, 35, 0.16);
  cloud(220, 360, 240, 40, 50, 0.16);
  cloud(220, 150, 450, 60, 50, 0.16);
  cloud(350, 140, 540, 30, 60, 0.2);
  cloud(250, 200, 540, 60, 60, 0.17);
  cloud(220, 265, 575, 22, 80, 0.25);
  cloud(150, 75, 550, 40, 30, 0.22);
  cloud(300, 80, 640, 70, 80, 0.3);
  cloud(400, 170, 640, 120, 70, 0.16);
  cloud(60, 365, 640, 70, 70, 0.8);
  cloud(60, 220, 620, 140, 80, 0.7);
  cloud(70, 260, 400, 150, 140, 0.7);
  for (let i = 0; i < 22; i++) dots.push([236 + i * 0.9 + rnd() * 4, 438 + i * 2, 0.6 * rnd(), 1]);
  for (let t = -2; t < 6; t++) for (const d of dots) {
    c.fillStyle = 'rgba(0,0,0,' + d[2] + ')';
    c.fillRect(Math.round(d[0] + t * P - OX), Math.round(d[1] - OY), d[3], 1);
  }
})();
```
